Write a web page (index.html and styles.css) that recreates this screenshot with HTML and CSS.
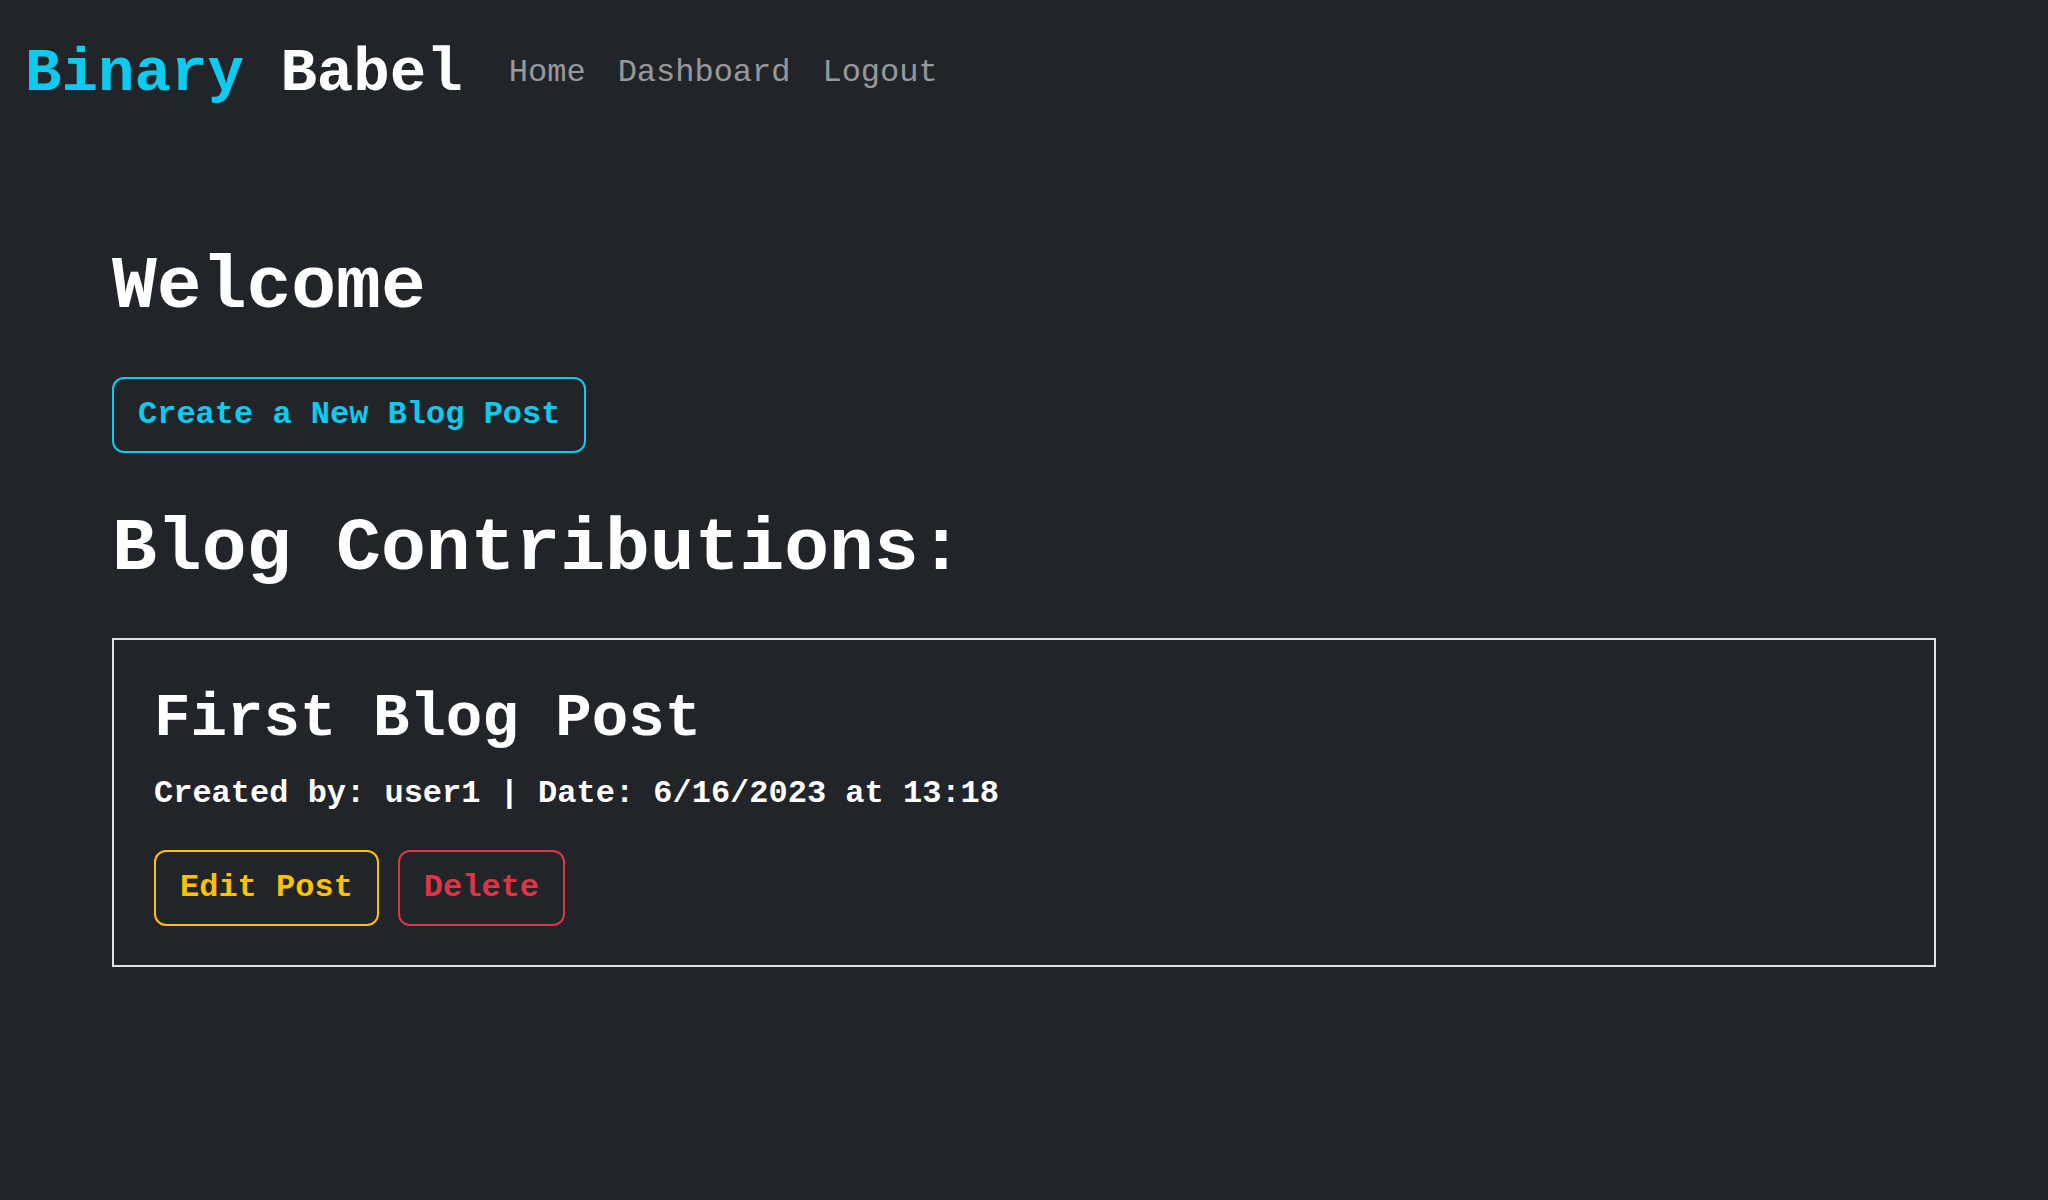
FILE: index.html
```html
<!DOCTYPE html>
<html lang="en">
<head>
<meta charset="utf-8">
<title>Binary Babel</title>
<link rel="stylesheet" href="styles.css">
</head>
<body>
<nav class="navbar">
  <a class="brand" href="#"><span class="brand-accent">Binary</span> Babel</a>
  <ul class="nav-links">
    <li><a class="nav-link" href="#">Home</a></li>
    <li><a class="nav-link" href="#">Dashboard</a></li>
    <li><a class="nav-link" href="#">Logout</a></li>
  </ul>
</nav>
<main class="content">
  <h1 class="page-title">Welcome</h1>
  <a class="btn btn-info" href="#">Create a New Blog Post</a>
  <h1 class="section-title">Blog Contributions:</h1>
  <article class="post-card">
    <h2 class="post-title">First Blog Post</h2>
    <p class="post-meta">Created by: user1 | Date: 6/16/2023 at 13:18</p>
    <div class="post-actions">
      <a class="btn btn-warning" href="#">Edit Post</a>
      <a class="btn btn-danger" href="#">Delete</a>
    </div>
  </article>
</main>
</body>
</html>
```
FILE: styles.css
```css
html, body {
  margin: 0;
  padding: 0;
}
body {
  background: #212529;
  color: #ffffff;
  font-family: "Liberation Mono", "Courier New", monospace;
  font-weight: 700;
  min-height: 1200px;
}
a {
  text-decoration: none;
}
.navbar {
  display: flex;
  align-items: flex-start;
  padding: 38px 24px 0 25px;
}
.brand {
  font-size: 60.8px;
  line-height: 1.2;
  color: #ffffff;
  margin-right: 30px;
  white-space: nowrap;
}
.brand-accent {
  color: #0dcaf0;
}
.nav-links {
  display: flex;
  list-style: none;
  margin: 11px 0 0;
  padding: 0;
}
.nav-link {
  display: block;
  font-size: 32px;
  line-height: 48px;
  padding: 0 16px;
  font-weight: 400;
  color: rgba(255, 255, 255, 0.55);
}
.content {
  padding: 132px 112px 0;
}
.page-title,
.section-title {
  font-size: 74.7px;
  line-height: 1.2;
  margin: 0 0 44px;
  font-weight: 700;
}
.section-title {
  margin-top: 52px;
}
.btn {
  display: inline-block;
  font-size: 32px;
  line-height: 48px;
  padding: 12px 24px;
  border: 2px solid currentColor;
  border-radius: 12px;
  background: transparent;
}
.btn-info {
  color: #0dcaf0;
}
.btn-warning {
  color: #ffc107;
}
.btn-danger {
  color: #dc3545;
}
.post-card {
  border: 2px solid #dee2e6;
  padding: 43px 40px 39px;
}
.post-title {
  font-size: 60.8px;
  line-height: 1.2;
  margin: 0 0 14px;
  font-weight: 700;
}
.post-meta {
  font-size: 32px;
  line-height: 48px;
  margin: 0 0 32px;
}
.post-actions {
  display: flex;
  gap: 19px;
}
```
